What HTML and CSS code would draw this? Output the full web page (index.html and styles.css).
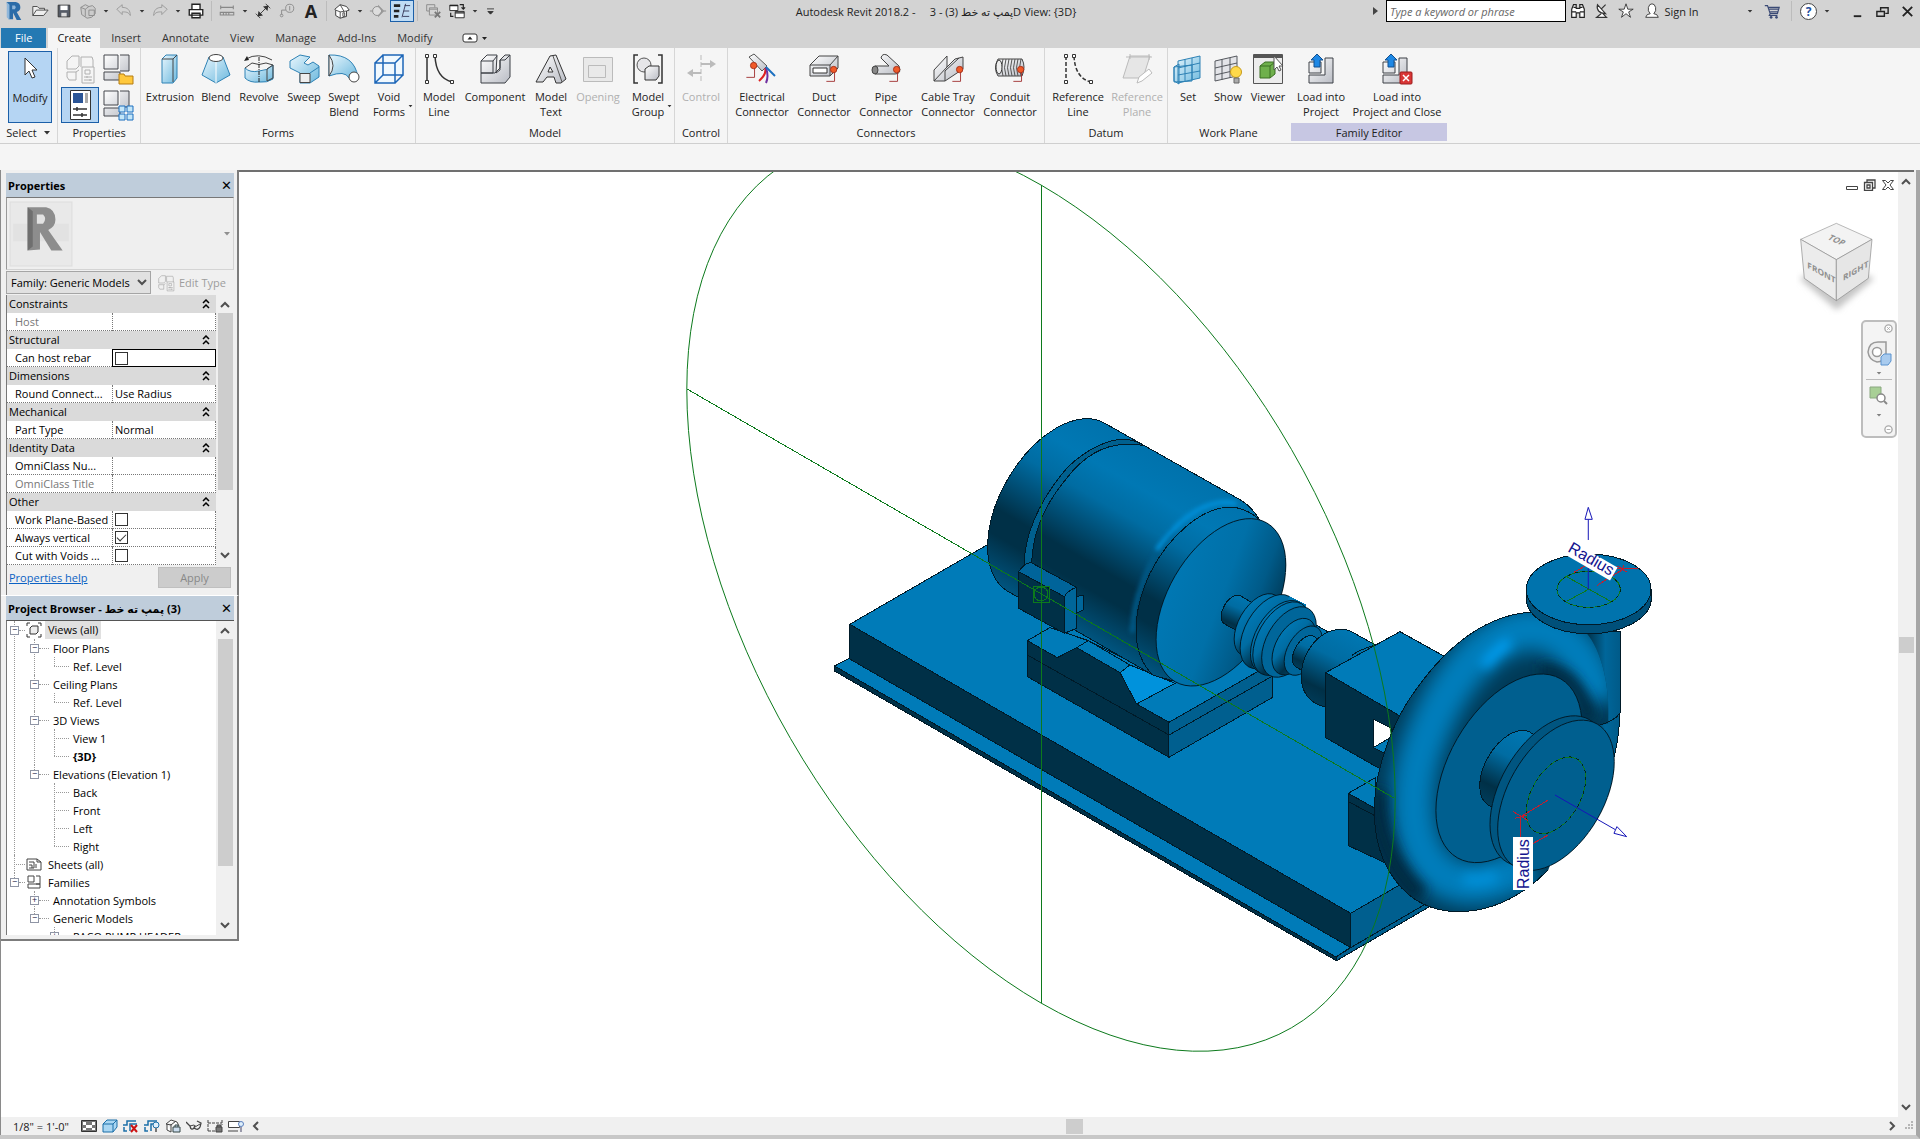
FILE: index.html
```html
<!DOCTYPE html>
<html lang="en">
<head>
  <meta charset="UTF-8" />
  <meta name="viewport" content="width=device-width, initial-scale=1.0" />
  <title>Autodesk Revit 2018.2</title>
  <link rel="stylesheet" href="styles.css">
</head>
<body>
  <!-- shared icons -->
  <svg class="defs" aria-hidden="true">
    <defs>
      <linearGradient id="g-blue" x1="0" y1="0" x2="1" y2="1"><stop offset="0" stop-color="#e8f6fd"/><stop offset="1" stop-color="#6db9de"/></linearGradient>
      <linearGradient id="g-grey" x1="0" y1="0" x2="1" y2="1"><stop offset="0" stop-color="#fff"/><stop offset="1" stop-color="#b9bcc4"/></linearGradient>
    </defs>
    <symbol id="caret" viewBox="0 0 8 5"><path d="M1 1h6L4 4.500z" fill="#333"/></symbol>
    <symbol id="dot" viewBox="0 0 16 22"><path d="M13 4v14H4" fill="none" stroke="#a03030"/><circle cx="12" cy="5" r="3.500" fill="#f05a28" stroke="#a3301a"/></symbol>
    <symbol id="blocks" viewBox="0 0 32 32"><path d="M2 2h14v14H2zM18 2h9v16h-9M2 19h16v8H2z" fill="url(#g-grey)" stroke="#44474d"/></symbol>
    <symbol id="types" viewBox="0 0 32 32"><path d="M4 7l4-4h7v10l-3 3H3V8zM17 4h11l1 3v8M17 4v10M3 19h9v8H5l-2-3zM12 19l3-2" fill="none" stroke="currentColor"/><path d="M18 14h12v16H18z" fill="#f5f5f5" stroke="currentColor"/><path d="M21 17h5v4h-5zM20 24h8M20 27h8M23 23v2M26 26v2" fill="none" stroke="currentColor"/></symbol>
    <symbol id="up" viewBox="0 0 12 8"><path d="M2 7l4-4 4 4" fill="none" stroke="#505050" stroke-width="2"/></symbol>
    <symbol id="fold" viewBox="0 0 8 10"><path d="M1 4l3-3 3 3M1 9l3-3 3 3" fill="none" stroke="#000" stroke-width="1.500"/></symbol>
  </svg>

  <header class="titlebar">
    <div class="qat">
      <svg class="logo" viewBox="0 0 20 22"><path d="M2 1h10q5 1 5 6 0 4-4 5l5 9h-5L9 13v7H4z" fill="#2b6ca8"/><path d="M2 1l3 3v17l-3-3zM8 5h3q2 2 0 4H8z" fill="#8fb6da"/></svg>
      <button aria-label="Open"><svg viewBox="0 0 20 20"><path d="M2 15V5h5l2 2h6v2M2 15l4-6h13l-5 6z" fill="#eee" stroke="#444"/></svg></button>
      <button aria-label="Save"><svg viewBox="0 0 20 20"><path d="M3.500 3.500h13v13h-13z" fill="#555b66" stroke="#333"/><path d="M6 4h8v5H6z" fill="#fff"/><path d="M7 12h6v4H7z" fill="#ddd"/></svg></button>
      <button aria-label="Synchronize"><svg viewBox="0 0 20 20"><path d="M2 6l5-3 4 2 4-1 3 3v6l-4 4-5 1-6-4zM2 6l5 2 4-3M7 8v8M11 9h6v6h-6z" fill="#ccc" stroke="#8a8a8a"/></svg></button>
      <button class="drop" aria-label="Sync menu"><svg><use href="#caret"/></svg></button>
      <button aria-label="Undo"><svg viewBox="0 0 20 20"><path d="M2 8l6-5v3c6 0 9 3 9 9-2-4-5-4-9-4v3z" fill="none" stroke="#999"/></svg></button>
      <button class="drop" aria-label="Undo list"><svg><use href="#caret"/></svg></button>
      <button aria-label="Redo"><svg viewBox="0 0 20 20"><path d="M18 8l-6-5v3c-6 0-9 3-9 9 2-4 5-4 9-4v3z" fill="none" stroke="#999"/></svg></button>
      <button class="drop" aria-label="Redo list"><svg><use href="#caret"/></svg></button>
      <button aria-label="Print"><svg viewBox="0 0 20 20"><path d="M5.500 8V2.500h9V8M2.500 8.500h15v6h-15zM5.500 12.500h9v5h-9z" fill="#fff" stroke="#222" stroke-width="1.500"/></svg></button>
      <span class="sep"></span>
      <button aria-label="Measure"><svg viewBox="0 0 20 20"><path d="M3 6h14M3 4v4M17 4v4M2.500 11.500h15v3h-15zM6 12v2M9 12v2M12 12v2" fill="none" stroke="#888" stroke-width="1.200"/></svg></button>
      <button class="drop" aria-label="Measure menu"><svg><use href="#caret"/></svg></button>
      <button aria-label="Aligned dimension"><svg viewBox="0 0 20 20"><path d="M5 15L15 5M2 13l5 5M13 2l5 5" fill="none" stroke="#333"/><path d="M4 16l1-6 5 5zM16 4l-1 6-5-5z" fill="#333"/></svg></button>
      <button aria-label="Tag by category"><svg viewBox="0 0 20 20"><circle cx="13" cy="7" r="4.500" fill="none" stroke="#888"/><path d="M13 4.500v5M8.500 9H4v5" fill="none" stroke="#888"/><circle cx="4" cy="15" r="1.500" fill="none" stroke="#888"/></svg></button>
      <button class="letter" aria-label="Text">A</button>
      <span class="sep"></span>
      <button aria-label="Default 3D view"><svg viewBox="0 0 20 20"><path d="M2 8l6-5 7 2 3 4-3 1v6l-7 2-5-3V9z" fill="#fff" stroke="#333"/><path d="M3 9l5 2 7-1M8 11v7M11 12h2v4h-2zM8 3l4 7" fill="none" stroke="#444"/></svg></button>
      <button class="drop" aria-label="3D menu"><svg><use href="#caret"/></svg></button>
      <button aria-label="Section"><svg viewBox="0 0 20 20"><path d="M1 10h3M16 10h3" stroke="#888"/><circle cx="9" cy="10" r="5" fill="#ddd" stroke="#888"/><path d="M10 3l7 7-7 7v-2l4-5-4-5z" fill="#999"/></svg></button>
      <button class="active" aria-label="Thin lines"><svg viewBox="0 0 20 20"><path d="M1 4h7M1 10h6M1 16h5" stroke="#222" stroke-width="3"/><path d="M10 17l4-15M13 4h6M12 10h6M11 16h7" fill="none" stroke="#335"/></svg></button>
      <span class="sep"></span>
      <button aria-label="Close hidden windows"><svg viewBox="0 0 20 20"><path d="M3 3h9v3M3 3v7h3M6 6.500h9v8H6zM6 8h9" fill="none" stroke="#888"/><path d="M12 11l6 6M18 11l-6 6" stroke="#777" stroke-width="2"/></svg></button>
      <button aria-label="Switch windows"><svg viewBox="0 0 20 20"><path d="M2 3.500h9v6H2zM8 10.500h10v7H8z" fill="#fff" stroke="#222"/><path d="M8 12h10M2 4h9M13 3h4v4M15 6l2 2 2-2M3 12v4h3" fill="none" stroke="#222" stroke-width="1.300"/></svg></button>
      <button class="drop" aria-label="Windows menu"><svg><use href="#caret"/></svg></button>
      <button class="drop more" aria-label="Customize"><svg viewBox="0 0 10 8"><path d="M1 1h8M2 4h6L5 7z" fill="#333" stroke="#333"/></svg></button>
    </div>
    <h1>Autodesk Revit 2018.2 - &nbsp;&nbsp;&nbsp; 3 - (3) <bdi dir="rtl">پمپ ته خط</bdi>D View: {3D}</h1>
    <div class="infocenter">
      <svg class="play" viewBox="0 0 5 8"><path d="M0 0l5 4-5 4z" fill="#444"/></svg>
      <input type="text" placeholder="Type a keyword or phrase" aria-label="Search">
      <button aria-label="Find"><svg viewBox="0 0 20 20"><path d="M3 8l2-5h3v4h4V3h3l2 5v9h-5v-5H8v5H3zM5 6h3M12 6h3M3 11h5M12 11h5" fill="#fff" stroke="#222" stroke-width="1.300"/></svg></button>
      <button aria-label="Communication center"><svg viewBox="0 0 20 20"><path d="M5 3q-2 9 9 10zM9 8l5-5M9 13l-5 4h11l-4-4" fill="#fff" stroke="#333" stroke-width="1.300"/></svg></button>
      <button aria-label="Favorites"><svg viewBox="0 0 20 20"><path d="M10 2l2 6h6l-5 3 2 6-5-4-5 4 2-6-5-3h6z" fill="#fff" stroke="#333"/></svg></button>
      <button class="sign"><svg viewBox="0 0 20 20"><path d="M3 17q1-4 5-4-3-3-2-7 1-4 4-4t4 4q1 4-2 7 4 0 5 4z" fill="#fff" stroke="#333"/></svg>Sign In</button>
      <button class="drop" aria-label="Account menu"><svg><use href="#caret"/></svg></button>
      <button class="cart" aria-label="App store"><svg viewBox="0 0 20 20"><path d="M2 4h3l3 9h8l2-7H6M7 8h10M8 11h9M8 13l-1 2h9" fill="none" stroke="#3b4a75" stroke-width="1.300"/><circle cx="9" cy="17" r="1.500" fill="#3b4a75"/><circle cx="15" cy="17" r="1.500" fill="#3b4a75"/></svg></button>
      <span class="sep"></span>
      <button class="help" aria-label="Help">?</button>
      <button class="drop" aria-label="Help menu"><svg><use href="#caret"/></svg></button>
    </div>
    <div class="winctl">
      <button aria-label="Minimize"><svg viewBox="0 0 16 16"><path d="M4 13h8" stroke="#222" stroke-width="2"/></svg></button>
      <button aria-label="Restore"><svg viewBox="0 0 16 16"><path d="M6 7V4h8v6h-3M2 8h8v5H2zM6 4h8M2 8h8" fill="none" stroke="#222" stroke-width="1.500"/></svg></button>
      <button aria-label="Close"><svg viewBox="0 0 16 16"><path d="M3 3l10 10M13 3L3 13" stroke="#222" stroke-width="2"/></svg></button>
    </div>
  </header>

  <nav class="tabs">
    <a href="#" class="file">File</a>
    <a href="#" class="current">Create</a>
    <a href="#">Insert</a>
    <a href="#">Annotate</a>
    <a href="#">View</a>
    <a href="#">Manage</a>
    <a href="#">Add-Ins</a>
    <a href="#">Modify</a>
    <button class="collapse" aria-label="Minimize ribbon"><svg viewBox="0 0 26 10"><rect x="1" y="1" width="14" height="8" rx="2" fill="#fff" stroke="#333"/><path d="M5.500 6.500h5L8 3.500zM20 4h5l-2.500 3z" fill="#222"/></svg></button>
  </nav>

  <!-- ribbon -->
  <section class="ribbon">
    <div class="panel select">
      <div class="tools">
        <button class="tool active w44"><svg viewBox="0 0 32 32"><path d="M11 4v17l4-4 3 7 3-1-3-7h5z" fill="#fff" stroke="#333"/></svg>Modify</button>
      </div>
      <h2>Select <svg class="tri"><use href="#caret"/></svg></h2>
    </div>
    <div class="panel props">
      <div class="tools grid2">
        <button class="off" aria-label="Type properties"><svg viewBox="0 0 32 32"><use href="#types"/></svg></button>
        <button aria-label="Family category"><svg viewBox="0 0 32 32"><use href="#blocks"/><path d="M17 21h5l1 2h8v8H17z" fill="#ffc83c" stroke="#b57d12"/></svg></button>
        <button class="active" aria-label="Properties"><svg viewBox="0 0 32 32"><path d="M6.500 1.500h20v29h-20z" fill="#fff" stroke="#333"/><path d="M9 4h10v10H9z" fill="#2b5597"/><path d="M21 4h3v10h-3z" fill="#aaa"/><path d="M9 20h14M9 26h14M13 18v4M18 24v4" stroke="#333" stroke-width="1.500"/></svg></button>
        <button aria-label="Family types"><svg viewBox="0 0 32 32"><use href="#blocks"/><path d="M17 17h6v6h-6zM25 17h6v6h-6zM17 25h6v6h-6zM25 25h6v6h-6z" fill="#c4e6f8" stroke="#1b6fc0"/></svg></button>
      </div>
      <h2>Properties</h2>
    </div>
    <div class="panel">
      <div class="tools">
        <button class="tool w56"><svg viewBox="0 0 32 32"><path d="M8 6l4-4h11v23l-4 5H8z" fill="url(#g-blue)" stroke="#2e82b5"/><path d="M8 6h11l4-4M19 6v23" fill="none" stroke="#444"/></svg>Extrusion</button>
        <button class="tool w36"><svg viewBox="0 0 32 32"><path d="M9 4L2 22l14 8 14-8L23 4z" fill="url(#g-blue)" stroke="#2e82b5"/><path d="M16 8v22" stroke="#fff"/><ellipse cx="16" cy="5" rx="7" ry="3.500" fill="#fff" stroke="#444"/></svg>Blend</button>
        <button class="tool w50"><svg viewBox="0 0 32 32"><path d="M2 15q5 5 14 3 8 0 14-6v14q-6 4-14 3-9 1-14-4z" fill="url(#g-blue)" stroke="#2e82b5"/><path d="M2 15l7-5q7 3 14 0l7 2M24 16v12l6-3V12zM3 6q12-7 26 1" fill="none" stroke="#444"/><path d="M1 8l3-5 2 4z" fill="#222"/><path d="M16 4v26" stroke="#222" stroke-dasharray="4 1 1 1"/></svg>Revolve</button>
        <button class="tool w40"><svg viewBox="0 0 32 32"><path d="M2 8l10-6 10 2-6 6 4 2 5-3 6 4v11l-9 6H12V20L2 15z" fill="url(#g-blue)" stroke="#2e82b5"/><path d="M12 20.500h10v9H12z" fill="#eee" stroke="#444"/><path d="M22 20l9-6" stroke="#2e82b5"/></svg>Sweep</button>
        <button class="tool w40"><svg viewBox="0 0 32 32"><path d="M1 2q25-1 29 22l-9 1Q17 17 1 23z" fill="url(#g-blue)" stroke="#2e82b5"/><path d="M1 2v21q8-10 0-21z" fill="#e6eef3" stroke="#444"/><circle cx="26" cy="24" r="5" fill="#fff" stroke="#444"/></svg>Swept<br>Blend</button>
        <button class="tool w50"><svg viewBox="0 0 32 32"><path d="M2 10h20v20H2zM10 2h20v20H10zM2 10l8-8M22 10l8-8M2 30l8-8M22 30l8-8" fill="#f0f8fe" stroke="#1c66b8" stroke-width="1.500"/></svg>Void<br>Forms <svg class="mini"><use href="#caret"/></svg></button>
      </div>
      <h2>Forms</h2>
    </div>
    <div class="panel">
      <div class="tools">
        <button class="tool w44"><svg viewBox="0 0 32 32"><path d="M4 3v26M12 3q1 22 17 26" fill="none" stroke="#333" stroke-width="1.500"/><path d="M2.500 1.500h3v3h-3zM2.500 27.500h3v3h-3zM10.500 1.500h3v3h-3zM27.500 27.500h3v3h-3z" fill="#fff" stroke="#333"/></svg>Model<br>Line</button>
        <button class="tool w68"><svg viewBox="0 0 32 32"><path d="M2 8l6-6h10l-1 18 4-3V7l5-5h5v22l-5 6H2z" fill="url(#g-grey)" stroke="#3d4046"/><path d="M2 8h12v12H2M2 20h14l5-5V7h5l5-5M14 8l4-5" fill="none" stroke="#3d4046"/></svg>Component</button>
        <button class="tool w44"><svg viewBox="0 0 32 32"><path d="M1 29L15 3l6-1 10 24-5 4h-5l-2-6h-7l-4 5zM15 14l-2 5h5z" fill="url(#g-grey)" stroke="#333" fill-rule="evenodd"/><path d="M18 3l9 26" stroke="#555"/></svg>Model<br>Text</button>
        <button class="tool w50 off"><svg viewBox="0 0 32 32"><path d="M1.500 4.500h29v24h-29z" fill="#e9e9e9" stroke="#bbb"/><path d="M6.500 12.500h17v12h-17z" fill="none" stroke="#bbb"/></svg>Opening</button>
        <button class="tool w50"><svg viewBox="0 0 32 32"><path d="M6 2H2v28h4M26 2h4v28h-4" fill="none" stroke="#333" stroke-width="1.500"/><circle cx="12" cy="12" r="7" fill="#e6e6e9" stroke="#555"/><path d="M13 16l4-3h10v10l-3 4H13z" fill="url(#g-grey)" stroke="#333"/></svg>Model<br>Group <svg class="mini"><use href="#caret"/></svg></button>
      </div>
      <h2>Model</h2>
    </div>
    <div class="panel">
      <div class="tools">
        <button class="tool w50 off"><svg viewBox="0 0 32 32"><path d="M16 2v28" stroke="#bbb" stroke-dasharray="5 2"/><path d="M16 11h12M4 20h12" stroke="#bbb" stroke-width="2"/><path d="M25 7l6 4-6 4zM8 16l-6 4 6 4z" fill="#bbb"/></svg>Control</button>
      </div>
      <h2>Control</h2>
    </div>
    <div class="panel connectors">
      <div class="tools">
        <button class="tool w62"><svg viewBox="0 0 32 32"><path d="M3 4l5-3 13 12-5 5z" fill="url(#g-grey)" stroke="#555"/><path d="M19 15q2 6-6 13" fill="none" stroke="#d22" stroke-width="2"/><path d="M20 15q3 8 0 15" fill="none" stroke="#7030a0" stroke-width="2"/><path d="M20 14l9 9" stroke="#1b6fc0" stroke-width="2"/><use href="#dot" x="-4" y="8" width="16" height="20"/></svg>Electrical<br>Connector</button>
        <button class="tool w62"><svg viewBox="0 0 32 32"><path d="M2 12l9-9h19v12l-8 8H2z" fill="url(#g-grey)" stroke="#444"/><path d="M2 12h20l8-9M22 12v11" fill="none" stroke="#444"/><path d="M5 15h14v5H5z" fill="#fff" stroke="#333"/><use href="#dot" x="14" y="12" width="16" height="20"/></svg>Duct<br>Connector</button>
        <button class="tool w62"><svg viewBox="0 0 32 32"><path d="M5 13h14l-8-8q1-5 6-3l12 11q3 8-4 8H5q-4-4 0-8z" fill="url(#g-grey)" stroke="#444"/><ellipse cx="5" cy="17" rx="3" ry="4" fill="#888" stroke="#444"/><use href="#dot" x="15" y="12" width="16" height="20"/></svg>Pipe<br>Connector</button>
        <button class="tool w62"><svg viewBox="0 0 32 32"><path d="M2 17L15 3v11l8-8 8-2v12L13 28H2z" fill="url(#g-grey)" stroke="#444"/><path d="M2 28l13-14M13 28V18L27 5" fill="none" stroke="#444"/><use href="#dot" x="16" y="12" width="16" height="20"/></svg>Cable Tray<br>Connector</button>
        <button class="tool w62"><svg viewBox="0 0 32 32"><path d="M4 6h24q4 8 0 17H4q-5-8 0-17z" fill="url(#g-grey)" stroke="#444"/><path d="M9 6q-3 9 0 17M12 6q-3 9 0 17M15 6q-3 9 0 17M18 6q-3 9 0 17M21 6q-3 9 0 17M24 6q-3 9 0 17M27 6q-3 9 0 17" fill="none" stroke="#555"/><ellipse cx="5" cy="14" rx="3" ry="7" fill="#eee" stroke="#333"/><use href="#dot" x="15" y="12" width="16" height="20"/></svg>Conduit<br>Connector</button>
      </div>
      <h2>Connectors</h2>
    </div>
    <div class="panel wide">
      <div class="tools">
        <button class="tool w62"><svg viewBox="0 0 32 32"><path d="M4 3v26M12 3q1 22 17 26" fill="none" stroke="#333" stroke-width="1.500" stroke-dasharray="4 2"/><path d="M2.500 1.500h3v3h-3zM2.500 27.500h3v3h-3zM10.500 1.500h3v3h-3zM27.500 27.500h3v3h-3z" fill="#fff" stroke="#333"/></svg>Reference<br>Line</button>
        <button class="tool w56 off"><svg viewBox="0 0 32 32"><path d="M9 3h20l-7 22H2z" fill="#e6e6e6" stroke="#bbb"/><path d="M9 1v5M28 1v6M5 4h26" stroke="#bbb"/><path d="M16 30l2-6 10-8 3 4-10 8z" fill="#fff" stroke="#bbb"/></svg>Reference<br>Plane</button>
      </div>
      <h2>Datum</h2>
    </div>
    <div class="panel plain">
      <div class="tools">
        <button class="tool w40"><svg viewBox="0 0 32 32"><path d="M6 8l22-5v22L6 30zM2 14l5-3v20l-5-3zM2 14l18-2v16L2 29z" fill="url(#g-blue)" stroke="#2e82b5"/><path d="M13 6v23M20 5v22M6 15l22-5M6 22l22-4" fill="none" stroke="#2e82b5"/></svg>Set</button>
        <button class="tool w40"><svg viewBox="0 0 32 32"><path d="M3 8l22-5v20L3 28zM10 6v21M18 5v20M3 15l22-5M3 22l22-5" fill="#e3e4e8" stroke="#55585e"/><circle cx="24" cy="19" r="5.500" fill="#ffd94a" stroke="#c79a1b"/><path d="M22 25h5v5h-5z" fill="#aaa" stroke="#666"/></svg>Show</button>
        <button class="tool w40"><svg viewBox="0 0 32 32"><path d="M1.500 1.500h29v29h-29z" fill="#ececec" stroke="#555"/><path d="M2 2h28v3H2z" fill="#555"/><path d="M8 13l5-4h10v12l-5 4H8z" fill="#6fb04c" stroke="#3a6f22"/><path d="M8 13h10l5-4M18 13v12" fill="none" stroke="#3a6f22"/><path d="M22 3v14l3-3 2 4 2-1-2-4h4z" fill="#fff" stroke="#555"/></svg>Viewer</button>
      </div>
      <h2>Work Plane</h2>
    </div>
    <div class="panel family wide">
      <div class="tools">
        <button class="tool w56"><svg viewBox="0 0 32 32"><path d="M4 9h12v11H4zM20 5h8v25H4v-8h16z" fill="url(#g-grey)" stroke="#3d4046"/><path d="M12 1l6 6h-3v7H9V7H6z" fill="#1e88e5" stroke="#12508f"/></svg>Load into<br>Project</button>
        <button class="tool w96"><svg viewBox="0 0 32 32"><path d="M2 9h12v11H2zM18 5h8v25H2v-8h16z" fill="url(#g-grey)" stroke="#3d4046"/><path d="M10 1l6 6h-3v7H7V7H4z" fill="#1e88e5" stroke="#12508f"/><rect x="19" y="19" width="12" height="12" rx="1" fill="#d93636" stroke="#9c1c1c"/><path d="M22 22l6 6M28 22l-6 6" stroke="#fff" stroke-width="1.500"/></svg>Load into<br>Project and Close</button>
      </div>
      <h2>Family Editor</h2>
    </div>
  </section>
  <div class="options"></div>

  <main class="workspace">
    <aside class="dock">
      <section class="palette">
        <header>Properties <button aria-label="Close properties">✕</button></header>
        <div class="preview">
          <svg class="thumb" viewBox="0 0 62 64"><path d="M1 1h60v62H1z" fill="#e9e9e9" stroke="#ddd"/><path d="M4 22h54v17H4z" fill="#e2e2e2"/><path d="M18 6h18q9 2 9 12 0 7-7 10l14 20H41L30 30v17l-12 1z" fill="#8d8d8d"/><path d="M18 6l5 4v34l-5 4z" fill="#6f6f6f"/><path d="M27 13h6q4 4 0 9h-6z" fill="#e2e2e2"/></svg>
          <svg class="arrow"><use href="#caret"/></svg>
        </div>
        <div class="typebar">
          <div class="combo">
            <select aria-label="Type filter"><option>Family: Generic Models</option></select>
            <svg class="flip"><use href="#up"/></svg>
          </div>
          <button disabled><svg viewBox="0 0 32 32"><use href="#types"/></svg>Edit Type</button>
        </div>
        <div class="scrollbox">
          <table>
            <tr class="group"><th colspan="2">Constraints<svg><use href="#fold"/></svg></th></tr>
            <tr class="dim"><th>Host</th><td></td></tr>
            <tr class="group"><th colspan="2">Structural<svg><use href="#fold"/></svg></th></tr>
            <tr><th><label for="rebar">Can host rebar</label></th><td class="focus"><input type="checkbox" id="rebar"></td></tr>
            <tr class="group"><th colspan="2">Dimensions<svg><use href="#fold"/></svg></th></tr>
            <tr><th>Round Connect...</th><td>Use Radius</td></tr>
            <tr class="group"><th colspan="2">Mechanical<svg><use href="#fold"/></svg></th></tr>
            <tr><th>Part Type</th><td>Normal</td></tr>
            <tr class="group"><th colspan="2">Identity Data<svg><use href="#fold"/></svg></th></tr>
            <tr><th>OmniClass Nu...</th><td></td></tr>
            <tr class="dim"><th>OmniClass Title</th><td></td></tr>
            <tr class="group"><th colspan="2">Other<svg><use href="#fold"/></svg></th></tr>
            <tr><th><label for="wpb">Work Plane-Based</label></th><td><input type="checkbox" id="wpb"></td></tr>
            <tr><th><label for="vert">Always vertical</label></th><td><input type="checkbox" id="vert" checked></td></tr>
            <tr><th><label for="voids">Cut with Voids ...</label></th><td><input type="checkbox" id="voids"></td></tr>
          </table>
          <div class="vscroll"><svg><use href="#up"/></svg><i class="thumb-a"></i><svg class="flip"><use href="#up"/></svg></div>
        </div>
        <footer><a href="#">Properties help</a><button disabled>Apply</button></footer>
      </section>

      <section class="palette browser">
        <header><span>Project Browser - <bdi dir="rtl">پمپ ته خط</bdi> (3)</span><button aria-label="Close browser">✕</button></header>
        <div class="scrollbox">
          <ul class="tree">
            <li><div class="row"><button class="exp">−</button><i></i><svg viewBox="0 0 16 16"><path d="M4 1H1v3M12 1h3v3M4 15H1v-3M12 15h3v-3" fill="none" stroke="#333"/><path d="M4 6l2-2h6v6l-2 2H4z" fill="#eee" stroke="#333"/></svg><span class="sel">Views (all)</span></div>
              <ul>
                <li><div class="row"><button class="exp">−</button><i></i><span>Floor Plans</span></div>
                  <ul><li><div class="row leaf"><i></i><span>Ref. Level</span></div></li></ul></li>
                <li><div class="row"><button class="exp">−</button><i></i><span>Ceiling Plans</span></div>
                  <ul><li><div class="row leaf"><i></i><span>Ref. Level</span></div></li></ul></li>
                <li><div class="row"><button class="exp">−</button><i></i><span>3D Views</span></div>
                  <ul><li><div class="row leaf"><i></i><span>View 1</span></div></li><li><div class="row leaf"><i></i><b>{3D}</b></div></li></ul></li>
                <li><div class="row"><button class="exp">−</button><i></i><span>Elevations (Elevation 1)</span></div>
                  <ul>
                    <li><div class="row leaf"><i></i><span>Back</span></div></li>
                    <li><div class="row leaf"><i></i><span>Front</span></div></li>
                    <li><div class="row leaf"><i></i><span>Left</span></div></li>
                    <li><div class="row leaf"><i></i><span>Right</span></div></li>
                  </ul></li>
              </ul></li>
            <li><div class="row sheet"><i></i><svg viewBox="0 0 16 16"><path d="M1 3h10l4 3v8H1zM11 3v3h4M3 6h5v6H3M10 8v4M3 9h3v3" fill="none" stroke="#444"/></svg><span>Sheets (all)</span></div></li>
            <li><div class="row"><button class="exp">−</button><i></i><svg viewBox="0 0 16 16"><path d="M2 2h6v6H2zM10 2h4v8h-4M2 10h12v4H2z" fill="none" stroke="#444"/></svg><span>Families</span></div>
              <ul>
                <li><div class="row"><button class="exp">+</button><i></i><span>Annotation Symbols</span></div></li>
                <li><div class="row"><button class="exp">−</button><i></i><span>Generic Models</span></div>
                  <ul><li><div class="row"><button class="exp">+</button><i></i><span>PACO PUMP HEADER</span></div></li></ul></li>
              </ul></li>
          </ul>
          <div class="vscroll"><svg><use href="#up"/></svg><i class="thumb-b"></i><svg class="flip"><use href="#up"/></svg></div>
        </div>
      </section>
    </aside>

    <section class="view">
      <svg class="scene">
        <defs>
          <linearGradient id="m-body" gradientUnits="userSpaceOnUse" x1="975" y1="138" x2="683" y2="644">
            <stop offset="0" stop-color="#0072ac"/><stop offset=".2" stop-color="#0078b4"/><stop offset=".36" stop-color="#006ca2"/><stop offset=".52" stop-color="#004c72"/><stop offset=".66" stop-color="#003047"/><stop offset=".78" stop-color="#003047"/><stop offset="1" stop-color="#005580"/>
          </linearGradient>
          <linearGradient id="m-front" x1=".3" y1="0" x2=".6" y2="1"><stop offset="0" stop-color="#0078b4"/><stop offset=".5" stop-color="#0070a8"/><stop offset=".8" stop-color="#005a88"/><stop offset="1" stop-color="#003f5f"/></linearGradient>
          <linearGradient id="m-cyl" x1=".7" y1="0" x2=".3" y2="1"><stop offset="0" stop-color="#0078b4"/><stop offset=".35" stop-color="#006ca2"/><stop offset=".7" stop-color="#003047"/><stop offset="1" stop-color="#004466"/></linearGradient>
          <linearGradient id="m-pipe" x1="0" y1="0" x2="1" y2="0"><stop offset="0" stop-color="#003047"/><stop offset=".55" stop-color="#00669a"/><stop offset="1" stop-color="#005a88"/></linearGradient>
          <filter id="soft" filterUnits="userSpaceOnUse" x="300" y="200" width="1100" height="1200"><feGaussianBlur stdDeviation="30"/></filter>
          <filter id="softer" filterUnits="userSpaceOnUse" x="300" y="200" width="1100" height="1200"><feGaussianBlur stdDeviation="18"/></filter>
          <filter id="glow" filterUnits="userSpaceOnUse" x="800" y="200" width="600" height="700"><feGaussianBlur stdDeviation="7"/></filter>
          <clipPath id="c-body"><path d="M562 573A291 168 -60 0 1 853 69L1265 303L1318 360L1115 858L1000 826z"/></clipPath>
          <clipPath id="c-vol"><path d="M960 365C800 365 670 470 560 640C500 740 462 860 463 970C465 1120 550 1265 715 1265C820 1265 910 1215 985 1140L1140 705L1165 700C1170 600 1150 490 1100 430z"/></clipPath>
        </defs>

        <!-- drawing is in window coordinates, shifted to the view corner -->
        <g transform="translate(-239 -172)">
          <!-- base plate -->
          <g class="edge">
            <path d="M834.500 666L850 658L1351 947L1430 900L1430 906L1336 960.500L834.500 671z" fill="#003047"/>
            <path d="M834.500 666L850 658L1351 947L1336 957z" fill="#007bb8"/>
            <path d="M1336 957L1351 947.500L1460 884V889L1336 961z" fill="#005f8f"/>
            <path d="M849.700 624.300L1082 490L1583 779L1350.700 913.300z" fill="#007bb8"/>
            <path d="M849.700 624.300L1350.700 913.300V947.600L849.700 659z" fill="#003047"/>
            <path d="M1350.700 913.300L1460 850V884L1350.700 947.600z" fill="#005f8f"/>
          </g>

          <!-- motor -->
          <g class="edge" transform="translate(820 400) scale(.3333)">
            <path d="M622 722L690 683L805 722L1065 850L1275 780L1358 825L1047 967L622 765z" fill="#007bb8"/>
            <path d="M622 722L712 773L770 743L900 818L950 912L1047 967V1072L622 830z" fill="#003047"/>
            <path d="M770 743L805 722L930 795L900 818z" fill="#007bb8"/>
            <path d="M900 818L930 795L1065 850L950 912z" fill="#0092dc"/>
            <path d="M1047 967L1325 808L1358 828V892L1047 1072z" fill="#005f8f"/>
            <path d="M622 765L1047 1005L1358 828" fill="none"/>

            <path d="M562 573A291 168 -60 0 1 853 69L1262 300Q1295 320 1318 358L1395 480L1115 858Q1040 830 1000 826z" fill="url(#m-body)"/>
            <path d="M613 500C610 420 650 310 740 205C800 145 870 115 920 118Q950 122 975 138Q945 130 915 133C850 135 790 170 740 235C660 330 635 420 635 500z" fill="#00608f"/>
            <g clip-path="url(#c-body)">
              <path d="M938 700C940 600 985 480 1060 390" fill="none" stroke="#005a88" stroke-width="16" filter="url(#glow)"/>
              <path d="M1010 450Q1080 350 1160 318Q1210 300 1250 312" fill="none" stroke="#008fd8" stroke-width="14" filter="url(#glow)"/>
            </g>
            <path d="M1318 358Q1270 318 1222 322C1150 325 1050 400 990 520C935 640 930 760 1000 826L1115 858L1318 358z" fill="url(#m-body)"/>
            <ellipse cx="1203" cy="607" rx="275" ry="159" transform="rotate(-60 1203 607)" fill="url(#m-front)"/>

            <path d="M770 590L790 585L792 628L770 640z" fill="#00669a"/>
            <path d="M733 590Q745 570 770 562V685L733 700z" fill="#00669a"/>
            <path d="M596 515L733 590V700L596 625z" fill="#003047"/>
            <path d="M596 515Q610 492 632 487L770 562Q745 570 733 590z" fill="#00649a"/>
          </g>

          <g transform="translate(1220 490) scale(.3333)">
            <g class="edge">
              <!-- shaft and coupling -->
              <path d="M14 402A48 28 -60 0 1 62 318L130 358L100 450z" fill="url(#m-cyl)"/>
              <ellipse cx="115" cy="405" rx="103" ry="59" transform="rotate(-60 115 405)" fill="url(#m-cyl)"/>
              <ellipse cx="147" cy="425" rx="122" ry="71" transform="rotate(-60 147 425)" fill="url(#m-cyl)"/>
              <path d="M96 531L150 560L260 345L208 319z" fill="url(#m-cyl)" stroke="none"/>
              <ellipse cx="177" cy="442" rx="121" ry="70" transform="rotate(-60 177 442)" fill="url(#m-cyl)"/>
              <ellipse cx="184" cy="446" rx="121" ry="70" transform="rotate(-60 184 446)" fill="url(#m-cyl)"/>
              <ellipse cx="207" cy="456" rx="116" ry="67" transform="rotate(-60 207 456)" fill="#00669a"/>
              <ellipse cx="222" cy="470" rx="93" ry="54" transform="rotate(-60 222 470)" fill="url(#m-cyl)"/>
              <ellipse cx="250" cy="482" rx="81" ry="47" transform="rotate(-60 250 482)" fill="#00669a"/>
              <path d="M228 531A53 30 -60 0 1 281 439L330 470L280 560z" fill="url(#m-cyl)"/>
              <!-- bearing housing -->
              <path d="M317 652C270 640 243 610 243 555C248 480 300 420 360 418Q385 418 400 428L470 467L440 700z" fill="url(#m-cyl)"/>
              <path d="M395 497Q420 478 460 467" fill="none"/>
              <path d="M317 548L540 425L675 500L620 725L535 678z" fill="#007bb8"/>
              <path d="M317 548L540 678V860L468 830L317 743z" fill="#003047"/>
              <path d="M460 687L515 715V745L460 773z" fill="#fff"/>
              <path d="M460 773L515 740L520 790L490 788z" fill="#007bb8"/>
              <path d="M385 910L468 862V960z" fill="#007bb8"/>
              <path d="M385 910L470 958L520 1130L385 1067zM385 935L470 980" fill="#003047"/>
            </g>

            <!-- outlet pipe -->
            <path class="edge" d="M1100 425H1202V600Q1202 720 1183 800L1100 720z" fill="url(#m-pipe)"/>
            <!-- volute -->
            <g clip-path="url(#c-vol)">
              <path d="M440 340H1220V1290H440z" fill="#003a57"/>
              <path d="M1130 640C1110 480 1010 410 920 415C770 440 660 610 600 790C550 960 580 1190 770 1180Q850 1170 930 1120" fill="none" stroke="#007ebc" stroke-width="130" filter="url(#soft)"/>
              <path d="M470 900Q465 1090 600 1220" fill="none" stroke="#002c42" stroke-width="60" filter="url(#softer)"/>
              <path d="M960 545Q1070 540 1110 690" fill="none" stroke="#002c42" stroke-width="46" filter="url(#softer)"/>
              <path d="M790 530Q825 485 870 455" fill="none" stroke="#00a4fb" stroke-width="28" filter="url(#softer)"/>
              <path d="M730 1165Q780 1180 830 1155" fill="none" stroke="#0092dc" stroke-width="34" filter="url(#softer)"/>
            </g>
            <g class="edge">
              <path d="M960 365C800 365 670 470 560 640C500 740 462 860 463 970C465 1120 550 1265 715 1265C820 1265 910 1215 985 1140" fill="none"/>
              <path d="M1140 705Q1180 695 1200 670" fill="none"/>
              <ellipse cx="867" cy="835" rx="310" ry="179" transform="rotate(-60 867 835)" fill="#005f8f"/>
              <path d="M803 944A126 73 -60 0 1 929 726L1000 770L900 1000z" fill="url(#m-cyl)"/>
              <ellipse cx="985" cy="903" rx="247" ry="143" transform="rotate(-60 985 903)" fill="#005580"/>
              <ellipse cx="1008" cy="916" rx="247" ry="143" transform="rotate(-60 1008 916)" fill="#005f8f"/>
              <path d="M919 298V325A187 106 0 0 0 1294 325V298z" fill="#00507a"/>
              <ellipse cx="1106" cy="298" rx="187" ry="106" fill="#0073ad"/>
            </g>
            <g class="ref">
              <ellipse cx="1106" cy="298" rx="95" ry="54"/>
              <ellipse cx="1008" cy="916" rx="126" ry="73" transform="rotate(-60 1008 916)"/>
            </g>
            <g class="ref dash">
              <ellipse cx="1106" cy="298" rx="95" ry="54"/>
              <ellipse cx="1008" cy="916" rx="126" ry="73" transform="rotate(-60 1008 916)"/>
            </g>
            <path class="ref" d="M1040 260L1172 334M1040 334L1106 298"/>
            <path class="red" d="M1062 247L1105 222M1130 287L1205 240M1165 236H1255M1192 228L1220 246M1212 226L1200 246M985 930L903 980V1045M880 965L925 992M885 985L922 975M940 1060L985 1035"/>
            <path class="axis" d="M1105 88V150M1105 215V298M1005 915L1186 1019"/>
            <path class="axis head" d="M1105 52L1095 88H1117zM1220 1040L1182 1030L1191 1010z"/>
          </g>

          <!-- reference circle -->
          <g class="ref">
            <circle r="409" transform="matrix(.866 .5 0 1 1041 594)"/>
            <path d="M1041 185V1003M687 389L1394 798"/>
            <path d="M1033 586h16v16h-16z"/>
            <circle cx="1041" cy="594" r="7"/>
          </g>

          <g class="radius" transform="translate(1567 551) rotate(30)"><rect x="2" y="-11" width="50" height="15"/><text>Radius</text></g>
          <g class="radius" transform="translate(1529 889) rotate(-90)"><rect x="-1" y="-16" width="53" height="20"/><text>Radius</text></g>
        </g>
      </svg>

      <div class="viewctl">
        <button aria-label="Minimize view"><svg viewBox="0 0 14 12"><path d="M1.500 7.500h11v3h-11z" fill="#fff" stroke="#444"/></svg></button>
        <button aria-label="Restore view"><svg viewBox="0 0 14 12"><path d="M4 3V1h8v8h-2M1.500 3.500h8v8h-8zM4 6h3v3H4z" fill="none" stroke="#444" stroke-width="1.300"/></svg></button>
        <button aria-label="Close view"><svg viewBox="0 0 14 12"><path d="M1.500 1.500h3L7 4l2.500-2.500h3L9 6l3.500 4.500h-3L7 8l-2.500 2.500h-3L5 6z" fill="#fff" stroke="#444"/></svg></button>
      </div>

      <svg class="cube" viewBox="110 165 246 288">
        <defs><filter id="shade"><feGaussianBlur stdDeviation="9"/></filter></defs>
        <path d="M120 340L232 435L345 340L232 300z" fill="#c4c4c4" filter="url(#shade)"/>
        <path d="M231 175L338 223L231 284L124 223z" fill="#f3f3f3" stroke="#999" stroke-width="2"/>
        <path d="M124 223L231 284V407L135 340z" fill="#ececec" stroke="#888" stroke-width="2"/>
        <path d="M338 223L231 284V407L327 340z" fill="#e6e6e6" stroke="#888" stroke-width="2"/>
        <g class="face">
          <text transform="translate(203 222) rotate(24) skewX(-20)">TOP</text>
          <text transform="translate(144 308) skewY(29)">FRONT</text>
          <text transform="translate(251 348) skewY(-30)">RIGHT</text>
        </g>
      </svg>

      <div class="navbar">
        <button class="small" aria-label="Close navigation bar"><svg viewBox="0 0 10 10"><circle cx="5" cy="5" r="4" fill="#fff" stroke="#aaa" stroke-width="1.500"/><path d="M3.500 3.500l3 3M6.500 3.500l-3 3" stroke="#aaa"/></svg></button>
        <button aria-label="Steering wheel"><svg viewBox="0 0 26 26"><path d="M2 12Q3 2 12 2h8v12q-2 8-9 8-8-2-9-10z" fill="#eee" stroke="#999" stroke-width="1.500"/><circle cx="11" cy="12" r="4.500" fill="#fff" stroke="#999" stroke-width="1.500"/><path d="M15 17l3-3h7v7l-3 4h-7z" fill="#a9cbee" stroke="#5b93cf"/></svg></button>
        <svg class="mini"><use href="#caret"/></svg>
        <hr>
        <button aria-label="Zoom"><svg viewBox="0 0 26 26"><path d="M4 5h11v11H4z" fill="#a8cf96" stroke="#8aa880"/><circle cx="15" cy="16" r="4" fill="#fff" stroke="#888" stroke-width="1.500"/><path d="M18 19l3 3" stroke="#888" stroke-width="2"/></svg></button>
        <svg class="mini"><use href="#caret"/></svg>
        <button class="small last" aria-label="Options"><svg viewBox="0 0 10 10"><circle cx="5" cy="5" r="4" fill="#fff" stroke="#aaa" stroke-width="1.500"/><path d="M3 5h4" stroke="#aaa"/></svg></button>
      </div>
    </section>
    <div class="vscroll main"><svg><use href="#up"/></svg><i></i><svg class="flip"><use href="#up"/></svg></div>

    <footer class="status">
      <span class="scale">1/8" = 1'-0"</span>
      <button aria-label="Detail level"><svg viewBox="0 0 16 14"><path d="M.500 1.500h15v11H.500z" fill="#777" stroke="#333"/><path d="M2 3h3v3H2zM11 3h3v3h-3zM5 6h6v3H5zM2 9h3v2H2zM11 9h3v2h-3z" fill="#fff"/></svg></button>
      <button aria-label="Visual style"><svg viewBox="0 0 16 14"><path d="M1 5l4-4h10v7l-4 5H1z" fill="#a9d6f2" stroke="#1b6fa8"/><path d="M1 5h10l4-4M11 5v8" fill="none" stroke="#1b6fa8"/></svg></button>
      <button aria-label="Crop off"><svg viewBox="0 0 16 14"><path d="M0 6h4V2h9M4 12H1V8M7 12V5h7" fill="none" stroke="#1b6fa8" stroke-width="1.500"/><path d="M8 6l6 7M14 6l-6 7" stroke="#c11" stroke-width="2"/></svg></button>
      <button aria-label="Crop region"><svg viewBox="0 0 16 14"><path d="M0 6h4V2h9M4 12H1V8M7 12V5h4" fill="none" stroke="#1b6fa8" stroke-width="1.500"/><circle cx="12" cy="6" r="3" fill="#dff0fc" stroke="#1b6fa8"/><path d="M11 9h2v4h-2z" fill="#777"/></svg></button>
      <button aria-label="Lock view"><svg viewBox="0 0 16 14"><path d="M1 5l5-4 6 2 2 4M2 5v6l4 2M6 5v8M1 5l5 1 5-4" fill="#fff" stroke="#444"/><path d="M8 8h7v5H8zM10 8V6h3v2" fill="#cde" stroke="#344"/></svg></button>
      <button aria-label="Temporary hide"><svg viewBox="0 0 16 14"><path d="M0 3l4 4q1 5 4 2l1-3M8 9q4 3 6-1l1-4-4-2" fill="none" stroke="#444" stroke-width="1.300"/><path d="M4 7l4-1M9 8l5-3" stroke="#444"/></svg></button>
      <button aria-label="Reveal constraints"><svg viewBox="0 0 16 14"><path d="M1 1v12M15 1v5M1 4h14M1 12h8" fill="none" stroke="#444" stroke-dasharray="3 1"/><path d="M9 8h6v5H9zM10 8V6h4v2" fill="#777" stroke="#444"/></svg></button>
      <button aria-label="Preview visibility"><svg viewBox="0 0 16 14"><path d="M.500 2.500h11v6H.500zM0 12h10" fill="#fff" stroke="#444"/><circle cx="13" cy="5" r="2.500" fill="#dff0fc" stroke="#5b7fbd"/><path d="M12 8h2v5h-2z" fill="#99a"/></svg></button>
      <button class="turn" aria-label="Scroll left"><svg><use href="#up"/></svg></button>
      <i class="hthumb"></i>
      <button class="turn right" aria-label="Scroll right"><svg><use href="#up"/></svg></button>
      <svg class="grip" viewBox="0 0 10 10"><path d="M7 0h2v2H7zM7 3h2v2H7zM4 3h2v2H4zM7 6h2v2H7zM4 6h2v2H4zM1 6h2v2H1z" fill="#b5b5b5"/></svg>
    </footer>
  </main>
</body>
</html>
```
FILE: styles.css
```css
* { margin: 0; padding: 0; box-sizing: border-box; }
html, body { height: 100%; }
body {
  display: flex; flex-direction: column;
  background: #f5f5f5;
  color: #222;
  font: 11px/15px "Open Sans", "Noto Sans", "DejaVu Sans", sans-serif;
  overflow: hidden;
}
button { border: 0; background: none; font: inherit; color: inherit; }
svg { display: block; flex: none; }
ul { list-style: none; }
.defs { position: absolute; width: 0; height: 0; }

/* title bar */
.titlebar {
  display: flex; align-items: flex-start;
  height: 28px;
  background: #d3d3d3;
}
.qat, .infocenter, .winctl { display: flex; align-items: center; height: 22px; }
.qat button, .infocenter button {
  width: 24px; height: 22px;
  display: flex; align-items: center; justify-content: center;
}
.qat button svg, .infocenter button svg { width: 18px; height: 18px; }
.qat .logo { width: 20px; height: 20px; margin: 0 4px; }
.qat .drop, .infocenter .drop { width: 12px; }
.qat .drop svg, .infocenter .drop svg { width: 6px; height: 4px; }
.qat .more { width: 18px; }
.qat .more svg { width: 9px; height: 7px; }
.qat .active { background: #bfdcf5; border: 1px solid #1b5fa8; }
.qat .letter { font-size: 18px; font-weight: bold; }
.sep { width: 1px; height: 20px; margin: 0 3px; background: #bcbcbc; }
.titlebar h1 {
  flex: 1;
  text-align: center;
  font-size: 11px; font-weight: normal; line-height: 23px;
}
.play { width: 5px; height: 8px; margin-right: 8px; }
.infocenter input {
  width: 180px; height: 22px;
  padding: 0 3px;
  border: 1px solid #000;
  background: #fff;
  font: italic 11px "Open Sans", sans-serif;
}
.infocenter input::placeholder { color: #666; }
.infocenter .sign { width: 66px; gap: 3px; margin-right: 40px; }
.infocenter .cart { width: 32px; }
.infocenter .help {
  width: 17px; height: 17px;
  margin: 0 4px 0 5px;
  border: 1px solid #444; border-radius: 50%;
  background: #fff;
  color: #1f4fa0; font-weight: bold; font-size: 12px;
}
.winctl { margin-left: 12px; }
.winctl button { width: 25px; display: flex; justify-content: center; }
.winctl svg { width: 15px; height: 15px; }

/* tabs */
.tabs { display: flex; height: 20px; padding-left: 1px; background: #d3d3d3; }
.tabs a {
  padding: 0 10px 0 11px;
  color: #333; text-decoration: none;
  line-height: 20px;
}
.tabs .file { padding: 0 14px; margin-right: 2px; background: #2479b3; color: #fff; }
.tabs .current { padding: 0 9px; background: #f5f5f5; color: #111; }
.collapse { margin-left: 20px; }
.collapse svg { width: 26px; height: 10px; }

/* ribbon */
.ribbon { display: flex; height: 96px; border-bottom: 1px solid #cfcfcf; }
.panel {
  display: flex; flex-direction: column;
  border-right: 1px solid #d6d6d6;
}
.panel h2 {
  height: 18px;
  margin-top: auto; margin-bottom: 2px;
  display: flex; justify-content: center; align-items: center; gap: 6px;
  font-size: 11px; font-weight: normal;
}
.tri { width: 8px; height: 5px; }
.tools { display: flex; height: 75px; padding: 3px 1px 0; }
.wide .tools { padding: 3px 2px 0; }
.tool {
  display: flex; flex-direction: column; align-items: center;
  height: 72px;
  position: relative;
  line-height: 15px;
  white-space: nowrap;
}
.tool > svg { width: 32px; height: 32px; margin: 2px 0 4px; }
.tool > svg.mini { position: absolute; right: 1px; bottom: 15px; width: 5px; height: 4px; margin: 0; }
.active { background: #b5d5f3; border: 1px solid #1b5fa8; }
.off { color: #b0b0b0; }
.w36 { width: 36px; }
.w40 { width: 40px; }
.w44 { width: 44px; }
.w50 { width: 50px; }
.w56 { width: 56px; }
.w62 { width: 62px; }
.w68 { width: 68px; }
.w96 { width: 96px; }
.select .tools { padding: 3px 5px 0 8px; }
.grid2 {
  display: grid; grid-template-columns: 38px 38px; grid-template-rows: 36px 36px;
  padding: 3px 3px 0;
}
.grid2 button { display: flex; align-items: center; justify-content: center; }
.grid2 svg { width: 32px; height: 32px; }
.connectors .tools { padding: 3px 3px 0; }
.plain { border: 0; padding-right: 2px; }
.plain .tools { padding-left: 0; }
.family { border: 0; }
.family h2 { background: #c7c7e3; }
.options { height: 26px; }

/* workspace */
.workspace {
  flex: 1;
  min-height: 0;
  display: grid;
  grid-template: 1fr 18px / 239px 1fr 16px;
  padding-right: 2px;
  border-right: 4px solid #a6a6a6;
  border-bottom: 4px solid #c8c8c8;
  background: #f0f0f0;
}
.dock { background: #fff; border-left: 1px solid #8a8a8a; min-height: 0; }
.palette {
  padding: 3px 3px 0 5px;
  border-right: 2px solid #7c7c7c;
  background: #f0f0f0;
}
.palette > header {
  display: flex; justify-content: space-between; align-items: center;
  height: 24px;
  padding: 0 2px 0 2px;
  background: #bfcddb;
  color: #000;
  font-weight: bold;
}
.palette header button { font: bold 13px "DejaVu Sans", sans-serif; }
.preview {
  display: flex; align-items: center; justify-content: space-between;
  height: 73px;
  padding: 0 2px;
  border: 1px solid #d4d4d4; border-top-color: #777; border-left-color: #999;
  background: #efefef;
}
.preview .thumb { width: 64px; height: 66px; }
.arrow { width: 8px; height: 5px; opacity: .5; }
.typebar { display: flex; align-items: center; gap: 6px; height: 25px; }
.combo { display: grid; align-items: center; width: 145px; }
.combo > * { grid-area: 1 / 1; }
.combo svg { width: 12px; height: 8px; justify-self: end; margin-right: 3px; pointer-events: none; }
.combo select {
  appearance: none;
  height: 23px;
  padding: 0 18px 0 4px;
  border: 1px solid #a5a5a5; border-radius: 0;
  background: #e1e1e1;
  font: 11px "Open Sans", sans-serif; color: #000;
}
.typebar button { display: flex; align-items: center; gap: 4px; color: #9d9d9d; }
.typebar button svg { width: 18px; height: 18px; }
.scrollbox { display: flex; border-left: 1px solid #777; }
.scrollbox table {
  flex: 1;
  table-layout: fixed; border-spacing: 0;
  background: #fff; color: #000;
}
th, td {
  height: 18px;
  border-bottom: 1px dotted #777;
  text-align: left; font-weight: normal; line-height: 16px;
  white-space: nowrap; overflow: hidden;
}
th { width: 105px; padding-left: 8px; }
td { padding-left: 2px; border-left: 1px dotted #777; border-right: 1px dotted #777; }
.dim th { color: #777; }
.group th { padding: 0 6px 0 2px; background: #dadada; border: 0; line-height: 18px; }
.group svg { float: right; width: 8px; height: 10px; margin-top: 4px; }
td.focus { border: 1px solid #000; }
input[type=checkbox] {
  appearance: none;
  display: block;
  width: 13px; height: 13px;
  border: 1px solid #333;
  background: #fff;
}
input[type=checkbox]:checked::after {
  content: '';
  display: block;
  width: 8px; height: 4px;
  margin: 2px 1px;
  border: solid #333; border-width: 0 0 1px 1px;
  transform: rotate(-45deg);
}
.vscroll {
  display: flex; flex-direction: column; align-items: center; justify-content: space-between;
  width: 18px;
  background: #f0f0f0;
}
.vscroll svg { width: 12px; height: 8px; margin: 5px 0; }
.flip { transform: rotate(180deg); }
.vscroll i { width: 15px; background: #cdcdcd; }
.thumb-a { height: 177px; margin-bottom: auto; }
.thumb-b { height: 227px; margin-bottom: auto; }
.palette footer {
  display: flex; justify-content: space-between; align-items: center;
  height: 30px;
  padding: 0 3px 5px 2px;
  border-left: 1px solid #777;
}
.palette footer a { color: #0b62c4; }
.palette footer button {
  width: 73px; height: 21px;
  border: 1px solid #bfbfbf;
  background: #ccc; color: #888;
}

/* project browser */
.browser { padding-top: 0; padding-bottom: 4px; border-top: 1px solid #fff; border-bottom: 2px solid #7c7c7c; }
.browser .scrollbox { height: 315px; overflow: hidden; background: #fff; border-top: 1px solid #555; }
.tree { flex: 1; padding-left: 7px; color: #000; }
.tree ul { padding-left: 20px; }
.tree li { position: relative; }
.tree li::before {
  content: '';
  position: absolute; left: 0; top: 0; bottom: 0;
  border-left: 1px dotted #999;
}
.tree li:last-child::before { bottom: auto; height: 9px; }
.row { display: flex; align-items: center; height: 18px; white-space: nowrap; }
.row i { width: 10px; margin-right: 3px; border-top: 1px dotted #999; }
.row .exp {
  position: relative;
  width: 9px; height: 9px;
  margin-left: -4px;
  border: 1px solid #8f95a5;
  background: #fff;
  color: #224; font-size: 9px; line-height: 6px;
}
.tree > li > .row i { width: 6px; margin-right: 1px; }
.tree > li > .row.sheet i { width: 11px; }
.row.leaf i { width: 15px; margin-right: 3px; }
.row svg { width: 16px; height: 16px; margin-right: 3px; }
.row span, .row b { padding: 0 1px; }
.tree > li > .row span { padding: 0 3px; }
.row .sel { height: 18px; line-height: 18px; background: #e0e0e0; }

/* 3D view */
.view { position: relative; border-top: 2px solid #707070; background: #fff; overflow: hidden; }
.scene { width: 100%; height: 100%; }
.scene * { vector-effect: non-scaling-stroke; }
.scene [filter] { vector-effect: none; }
.edge, .ref, .red { shape-rendering: crispEdges; }
.edge { stroke: #001a28; stroke-width: 1px; stroke-linejoin: round; }
.ref { fill: none; stroke: #0c7a1c; stroke-width: 1px; }
.dash { stroke-dasharray: 3 4; stroke: #012a18; }
.red { fill: none; stroke: #c02030; }
.axis { fill: none; stroke: #1616b8; }
.head { fill: #fff; }
.radius rect { fill: #fff; }
.radius text { fill: #14148f; font: 16px "Liberation Sans", sans-serif; }
.viewctl { position: absolute; top: 7px; right: 3px; display: flex; gap: 4px; }
.viewctl svg { width: 14px; height: 12px; }
.cube { position: absolute; top: 48px; right: 20px; width: 82px; height: 96px; }
.face text { fill: #909090; font: bold 25px "Open Sans", sans-serif; }
.navbar {
  position: absolute; top: 148px; right: 1px;
  display: flex; flex-direction: column; align-items: center;
  width: 36px; height: 118px;
  border: 2px solid #bdbdbd; border-radius: 5px;
  background: #f4f4f4;
}
.navbar .small { align-self: flex-end; padding: 2px 2px 0; }
.navbar button svg { width: 26px; height: 26px; }
.navbar .small svg { width: 9px; height: 9px; }
.navbar button:nth-of-type(2) { margin-top: 7px; }
.navbar .mini { width: 6px; height: 4px; margin: 5px 0 4px; opacity: .6; }
.navbar hr { width: 26px; border: 0; border-top: 1px solid #bbb; margin-bottom: 2px; }
.navbar .last { margin-top: auto; padding-bottom: 2px; }
.main { width: 16px; border-top: 2px solid #707070; }
.main i { height: 16px; }

/* view status bar */
.status {
  grid-column: 1 / -1;
  display: flex; align-items: center; gap: 5px;
  padding-left: 12px;
  border-left: 1px solid #8a8a8a;
}
.status .scale { width: 63px; }
.status button svg { width: 16px; height: 14px; }
.status .turn svg { width: 12px; height: 8px; transform: rotate(-90deg); }
.status .right svg { transform: rotate(90deg); }
.hthumb { width: 17px; height: 15px; margin: 0 auto; background: #cdcdcd; }
.grip { width: 10px; height: 10px; }
```
